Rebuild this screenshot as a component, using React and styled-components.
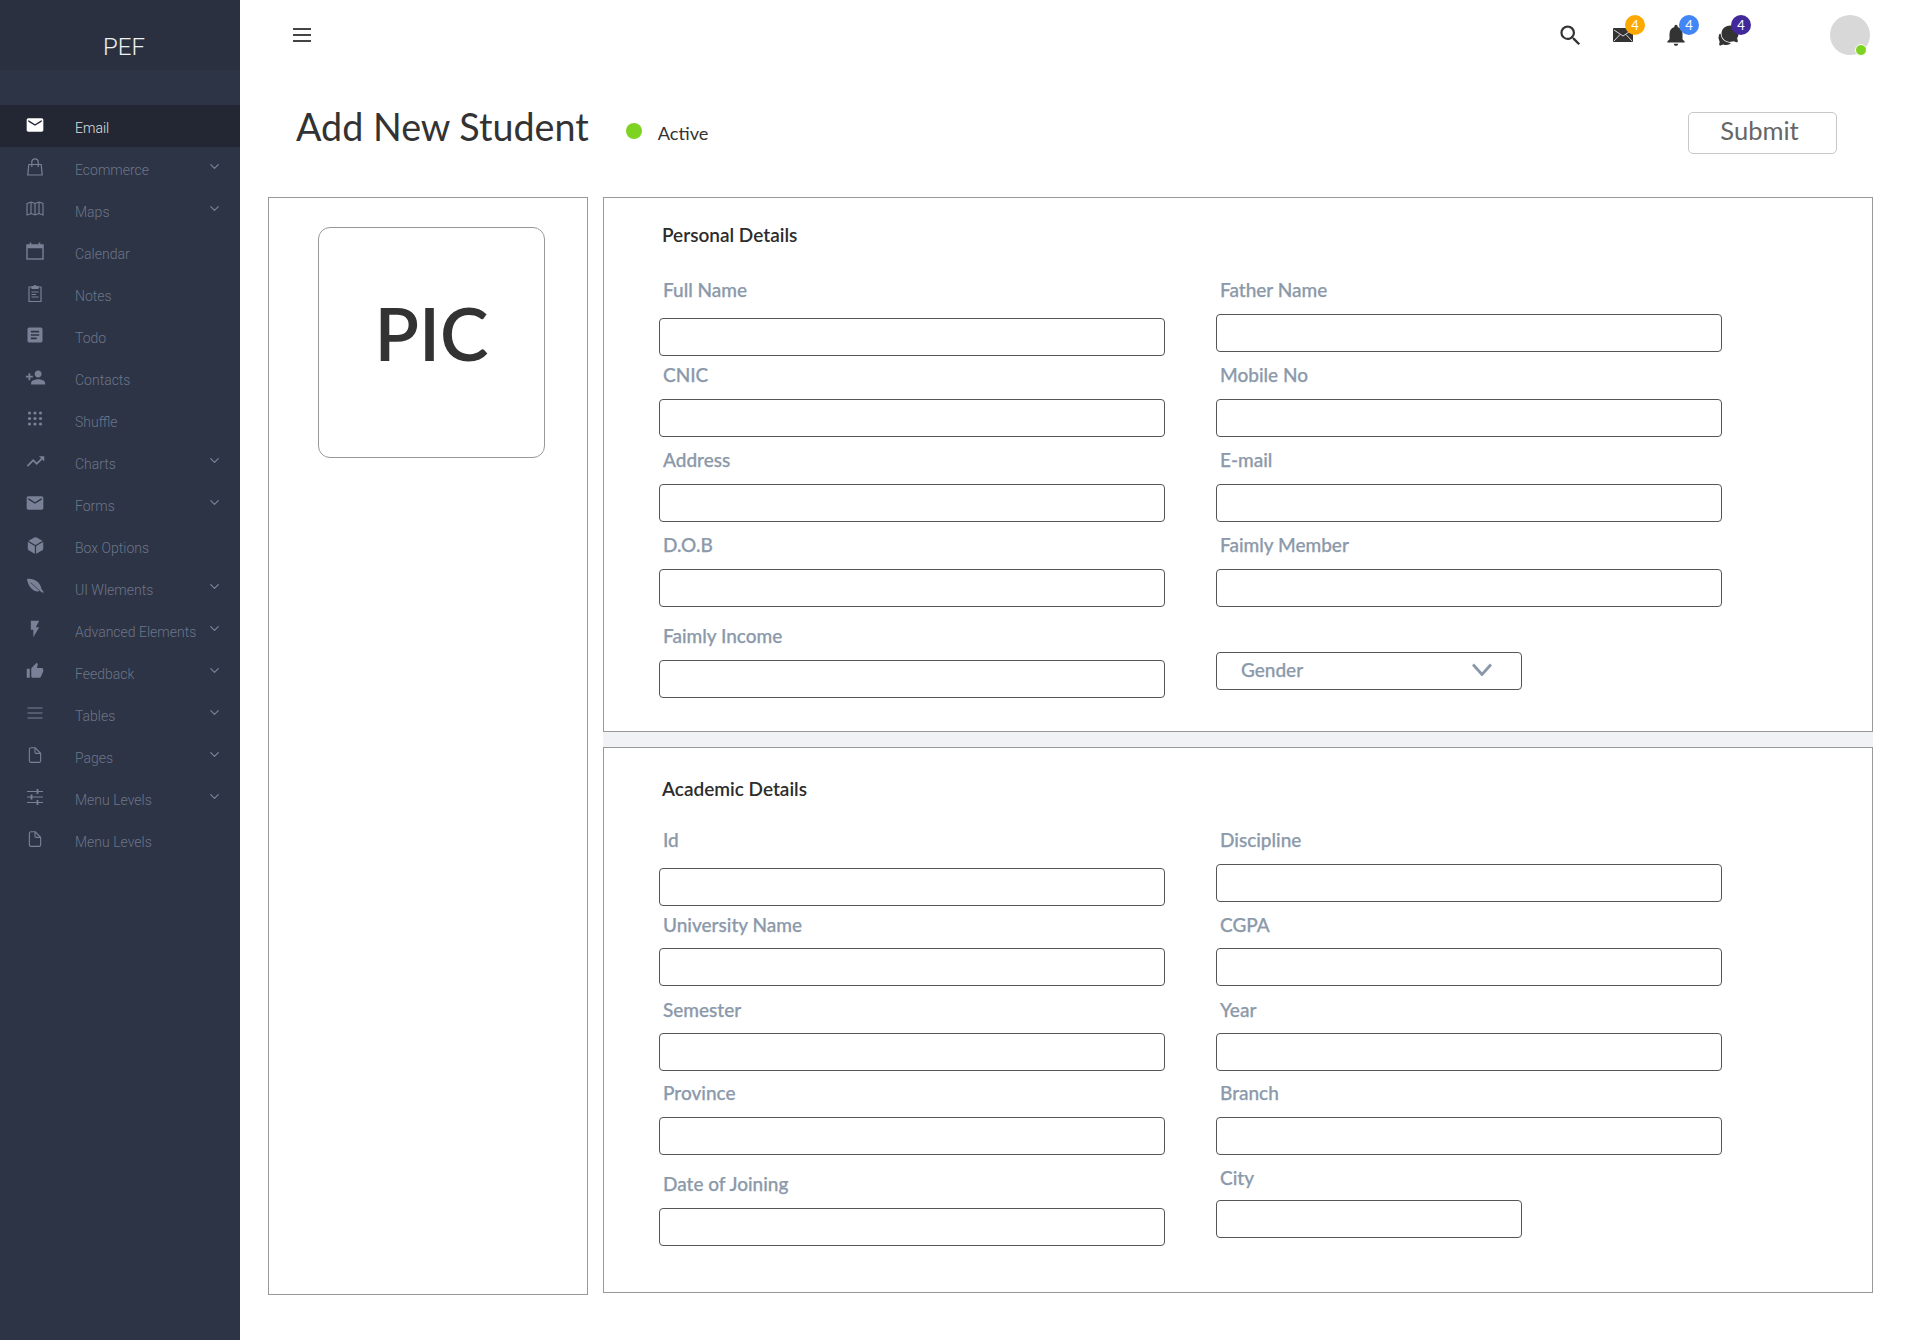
import styled, { createGlobalStyle } from "styled-components";
import { FiChevronDown } from "react-icons/fi";
import {
  MdEmail,
  MdArticle,
  MdPersonAdd,
  MdTrendingUp,
  MdFlashOn,
  MdThumbUp,
  MdSearch,
  MdNotifications,
} from "react-icons/md";
import { IoCube, IoDocumentOutline, IoChatbubbles } from "react-icons/io5";

const BagIcon = () => (
  <svg width="18" height="18" viewBox="0 0 18 18" fill="none" stroke="currentColor" strokeWidth="1.2">
    <path d="M2.800 6.500h12.400l1 10.500H1.800z" />
    <path d="M5.800 9V4a3.200 3.200 0 0 1 6.400 0v5" />
  </svg>
);

const MapIcon = () => (
  <svg width="18" height="18" viewBox="0 0 18 18" fill="none" stroke="currentColor" strokeWidth="1.1">
    <path d="M1 3.500 5 2l4 1.500L13 2l4 1.500V15l-4-1.500L9 15l-4-1.500L1 15z" />
    <path d="M5 2v11.500M9 3.500V15M13 2v11.500" />
  </svg>
);

const CalendarIcon = () => (
  <svg width="18" height="18" viewBox="0 0 18 18" fill="none" stroke="currentColor">
    <rect x="1" y="3" width="16" height="14" strokeWidth="1.4" />
    <rect x="1" y="3" width="16" height="3" fill="currentColor" strokeWidth="0.5" />
    <path d="M4.500 0.500v4M13.500 0.500v4" strokeWidth="1.600" />
  </svg>
);

const NotesIcon = () => (
  <svg width="18" height="18" viewBox="0 0 18 18" fill="none" stroke="currentColor" strokeWidth="1.2">
    <path d="M6 3H3v14.500h12V3h-3" />
    <path d="M6 4.500v-2h2a1 1 0 0 1 2 0h2v2z" fill="currentColor" />
    <path d="M5.500 8h7M5.500 10.500h4.500M5.500 13h7" />
  </svg>
);

const DotsIcon = () => (
  <svg width="18" height="18" viewBox="0 0 18 18" fill="currentColor">
    {[3, 8.500, 14].map((y) =>
      [3.500, 9, 14.500].map((x) => <circle key={`${x}-${y}`} cx={x} cy={y} r="1.600" />)
    )}
  </svg>
);

const LeafIcon = () => (
  <svg width="18" height="18" viewBox="0 0 18 18">
    <path d="M1 1c7-1 13.500 3.500 14.500 10L18 14.500h-2L14 13C8 15 2 9 1 1z" fill="currentColor" />
    <path d="M4.500 4.500 14 13" stroke="#2d3446" strokeWidth="0.7" />
  </svg>
);

const LinesIcon = () => (
  <svg width="18" height="18" viewBox="0 0 18 18" stroke="currentColor" strokeWidth="1.2">
    <path d="M1.500 4h15M1.500 9h15M1.500 14h15" />
  </svg>
);

const LevelsIcon = () => (
  <svg width="18" height="18" viewBox="0 0 18 18" stroke="currentColor" strokeWidth="1.100">
    <path d="M1 3.500h16M1 9h16M1 14.500h16" />
    <path d="M11.500 1v5M5.500 6.500v5M11.500 12v5" strokeWidth="1.800" />
  </svg>
);

const EnvelopeIcon = () => (
  <svg width="20" height="14" viewBox="0 0 20 14">
    <rect width="20" height="14" rx="1" fill="#333" />
    <path d="M1 2l9 6 9-6M1 13l6-6.500M19 13l-6-6.500" fill="none" stroke="#fff" strokeWidth="0.8" />
  </svg>
);

const SelectArrow = () => (
  <svg width="20" height="13" viewBox="0 0 20 13" fill="none" stroke="#8a97a8" strokeWidth="2.800">
    <path d="M1 1.500l9 10 9-10" />
  </svg>
);

const menu = [
  { label: "Email", icon: <MdEmail size={20} />, active: true },
  { label: "Ecommerce", icon: <BagIcon />, more: true },
  { label: "Maps", icon: <MapIcon />, more: true },
  { label: "Calendar", icon: <CalendarIcon /> },
  { label: "Notes", icon: <NotesIcon /> },
  { label: "Todo", icon: <MdArticle size={20} /> },
  { label: "Contacts", icon: <MdPersonAdd size={21} /> },
  { label: "Shuffle", icon: <DotsIcon /> },
  { label: "Charts", icon: <MdTrendingUp size={21} />, more: true },
  { label: "Forms", icon: <MdEmail size={20} />, more: true },
  { label: "Box Options", icon: <IoCube size={19} /> },
  { label: "UI Wlements", icon: <LeafIcon />, more: true },
  { label: "Advanced Elements", icon: <MdFlashOn size={20} />, more: true },
  { label: "Feedback", icon: <MdThumbUp size={18} />, more: true },
  { label: "Tables", icon: <LinesIcon />, more: true },
  { label: "Pages", icon: <IoDocumentOutline size={18} />, more: true },
  { label: "Menu Levels", icon: <LevelsIcon />, more: true },
  { label: "Menu Levels", icon: <IoDocumentOutline size={18} /> },
];

// top = space above the label, gap = space between label and input
const personalLeft = [
  { label: "Full Name", top: 0, gap: 16 },
  { label: "CNIC", top: 7, gap: 12 },
  { label: "Address", top: 11, gap: 12 },
  { label: "D.O.B", top: 11, gap: 12 },
  { label: "Faimly Income", top: 17, gap: 12 },
];

const personalRight = [
  { label: "Father Name", top: 0, gap: 12 },
  { label: "Mobile No", top: 11, gap: 12 },
  { label: "E-mail", top: 11, gap: 12 },
  { label: "Faimly Member", top: 11, gap: 12 },
];

const academicLeft = [
  { label: "Id", top: 0, gap: 16 },
  { label: "University Name", top: 7, gap: 11 },
  { label: "Semester", top: 12, gap: 11 },
  { label: "Province", top: 10, gap: 12 },
  { label: "Date of Joining", top: 17, gap: 12 },
];

const academicRight = [
  { label: "Discipline", top: 0, gap: 12 },
  { label: "CGPA", top: 11, gap: 11 },
  { label: "Year", top: 12, gap: 11 },
  { label: "Branch", top: 10, gap: 12 },
  { label: "City", top: 11, gap: 10, narrow: true },
];

function FieldList({ fields }) {
  return fields.map((f) => (
    <Field key={f.label} $top={f.top} $gap={f.gap} $narrow={f.narrow}>
      <Label>{f.label}</Label>
      <Input />
    </Field>
  ));
}

export default function App() {
  return (
    <Page>
      <GlobalStyle />
      <Sidebar>
        <Logo>PEF</Logo>
        <Menu>
          {menu.map((item, i) => (
            <MenuItem key={i} $active={item.active}>
              <MenuIcon>{item.icon}</MenuIcon>
              <MenuLabel>{item.label}</MenuLabel>
              {item.more && (
                <MenuArrow>
                  <FiChevronDown size={15} />
                </MenuArrow>
              )}
            </MenuItem>
          ))}
        </Menu>
      </Sidebar>

      <Main>
        <TopBar>
          <Burger>
            <span />
            <span />
            <span />
          </Burger>
          <TopIcons>
            <TopIcon $width={52}>
              <MdSearch size={27} color="#333" />
            </TopIcon>
            <TopIcon $width={54}>
              <EnvelopeIcon />
              <Badge $color="#ffa900">4</Badge>
            </TopIcon>
            <TopIcon $width={52}>
              <MdNotifications size={26} color="#333" />
              <Badge $color="#4285f4">4</Badge>
            </TopIcon>
            <TopIcon $width={52}>
              <IoChatbubbles size={23} color="#333" />
              <Badge $color="#42299a">4</Badge>
            </TopIcon>
            <Avatar>
              <OnlineDot />
            </Avatar>
          </TopIcons>
        </TopBar>

        <TitleRow>
          <Title>Add New Student</Title>
          <StatusDot />
          <Status>Active</Status>
          <Submit>Submit</Submit>
        </TitleRow>

        <Content>
          <PicPanel>
            <PicBox>PIC</PicBox>
          </PicPanel>
          <Forms>
            <Panel $top={24} $bottom={33}>
              <PanelTitle $bottom={30}>Personal Details</PanelTitle>
              <FormGrid>
                <Column>
                  <FieldList fields={personalLeft} />
                </Column>
                <Column>
                  <FieldList fields={personalRight} />
                  <Select>
                    <span>Gender</span>
                    <SelectArrow />
                  </Select>
                </Column>
              </FormGrid>
            </Panel>
            <Panel $top={28} $bottom={46}>
              <PanelTitle $bottom={26}>Academic Details</PanelTitle>
              <FormGrid>
                <Column>
                  <FieldList fields={academicLeft} />
                </Column>
                <Column>
                  <FieldList fields={academicRight} />
                </Column>
              </FormGrid>
            </Panel>
          </Forms>
        </Content>
      </Main>
    </Page>
  );
}

const GlobalStyle = createGlobalStyle`
  html, body {
    margin: 0;
    padding: 0;
    background: #fff;
    overflow: hidden;
  }
  * {
    box-sizing: border-box;
  }
`;

const Page = styled.div`
  display: flex;
  width: 1920px;
  height: 1340px;
  font-family: Lato, "Open Sans", sans-serif;
`;

const Sidebar = styled.aside`
  width: 240px;
  flex-shrink: 0;
  background: #2d3446;
  font-family: Roboto, sans-serif;
`;

const Logo = styled.div`
  height: 70px;
  padding-top: 24px;
  padding-left: 8px;
  display: flex;
  align-items: center;
  justify-content: center;
  margin-bottom: 35px;
  background: #2a3040;
  color: #eef0f3;
  font-size: 24px;
  font-weight: 300;
`;

const Menu = styled.nav`
  display: flex;
  flex-direction: column;
`;

const MenuItem = styled.div`
  height: 42px;
  display: flex;
  align-items: center;
  padding-left: 24px;
  padding-right: 18px;
  background: ${({ $active }) => ($active ? "#222733" : "transparent")};
  color: ${({ $active }) => ($active ? "#fff" : "#788195")};
`;

const MenuIcon = styled.div`
  width: 22px;
  height: 22px;
  margin-right: 29px;
  margin-top: -2px;
  display: flex;
  align-items: center;
  justify-content: center;
`;

const MenuLabel = styled.span`
  flex: 1;
  font-size: 14px;
  font-weight: 300;
  margin-top: 4px;
  opacity: 0.85;
`;

const MenuArrow = styled.div`
  display: flex;
  margin-top: -3px;
  color: #788195;
`;

const Main = styled.main`
  flex: 1;
  min-width: 0;
`;

const TopBar = styled.header`
  height: 70px;
  display: flex;
  align-items: center;
  justify-content: space-between;
  padding-left: 53px;
  padding-right: 50px;
`;

const Burger = styled.div`
  width: 18px;
  display: flex;
  flex-direction: column;
  gap: 4px;

  span {
    display: block;
    height: 2px;
    background: #444;
  }
`;

const TopIcons = styled.div`
  display: flex;
  align-items: center;
`;

const TopIcon = styled.div`
  position: relative;
  width: ${({ $width }) => $width}px;
  height: 30px;
  display: flex;
  align-items: center;
  justify-content: center;
`;

const Badge = styled.span`
  position: absolute;
  top: -5px;
  left: 29px;
  width: 20px;
  height: 20px;
  border-radius: 50%;
  background: ${({ $color }) => $color};
  color: #fff;
  font-size: 13px;
  line-height: 20px;
  text-align: center;
`;

const Avatar = styled.div`
  position: relative;
  width: 40px;
  height: 40px;
  margin-left: 76px;
  border-radius: 50%;
  background: #d8d8d8;
`;

const OnlineDot = styled.span`
  position: absolute;
  right: 3px;
  bottom: -1px;
  width: 12px;
  height: 12px;
  border-radius: 50%;
  border: 1.5px solid #fff;
  background: #7ed321;
`;

const TitleRow = styled.div`
  height: 127px;
  display: flex;
  align-items: flex-start;
  padding-left: 56px;
`;

const Title = styled.h1`
  margin: 32px 0 0;
  font-size: 37.7px;
  line-height: 50px;
  font-weight: 400;
  color: #333;
`;

const StatusDot = styled.span`
  width: 16px;
  height: 16px;
  margin: 53px 0 0 37px;
  border-radius: 50%;
  background: #7ed321;
`;

const Status = styled.span`
  margin: 51px 0 0 16px;
  font-size: 18.2px;
  line-height: 24px;
  color: #333;
`;

const Submit = styled.button`
  width: 149px;
  height: 42px;
  margin: 42px 83px 0 auto;
  background: #fff;
  border: 1px solid #c8c8c8;
  border-radius: 5px;
  color: #666;
  font-family: inherit;
  font-size: 25.5px;
  line-height: 34px;
  padding: 0 6px 6px 0;
`;

const Content = styled.div`
  display: flex;
  align-items: flex-start;
  gap: 15px;
  padding-left: 28px;
`;

const PicPanel = styled.div`
  width: 320px;
  height: 1098px;
  padding: 29px 0 0 49px;
  border: 1px solid #999;
`;

const PicBox = styled.div`
  width: 227px;
  height: 231px;
  border: 1px solid #999;
  border-radius: 12px;
  display: flex;
  align-items: center;
  justify-content: center;
  padding-bottom: 19px;
  color: #333;
  font-size: 73px;
  font-weight: 600;
`;

const Forms = styled.div`
  width: 1270px;
  display: flex;
  flex-direction: column;
  gap: 15px;
  background: #f0f2f5;
`;

const Panel = styled.section`
  background: #fff;
  border: 1px solid #999;
  padding: ${({ $top }) => $top}px 0 ${({ $bottom }) => $bottom}px 55px;
`;

const PanelTitle = styled.h2`
  margin: 0 0 ${({ $bottom }) => $bottom}px 3px;
  font-size: 19px;
  line-height: 26px;
  font-weight: 600;
  color: #2c2c2c;
`;

const FormGrid = styled.div`
  display: grid;
  grid-template-columns: 506px 506px;
  column-gap: 51px;
`;

const Column = styled.div`
  display: flex;
  flex-direction: column;
`;

const Field = styled.div`
  display: flex;
  flex-direction: column;
  margin-top: ${({ $top }) => $top}px;
  gap: ${({ $gap }) => $gap}px;
  width: ${({ $narrow }) => ($narrow ? "306px" : "100%")};
`;

const Label = styled.label`
  height: 24px;
  line-height: 24px;
  margin-left: 4px;
  font-size: 19px;
  font-weight: 500;
  color: #8b99aa;
  -webkit-text-stroke: 0.25px #8b99aa;
`;

const Input = styled.input`
  display: block;
  width: 100%;
  height: 38px;
  background: #fff;
  border: 1px solid #555;
  border-radius: 4px;
  outline: none;
`;

const Select = styled.div`
  width: 306px;
  height: 38px;
  margin-top: 45px;
  padding: 0 29px 3px 24px;
  display: flex;
  align-items: center;
  justify-content: space-between;
  border: 1px solid #555;
  border-radius: 4px;
  font-size: 19px;
  font-weight: 500;
  color: #8b99aa;
  -webkit-text-stroke: 0.25px #8b99aa;
`;
